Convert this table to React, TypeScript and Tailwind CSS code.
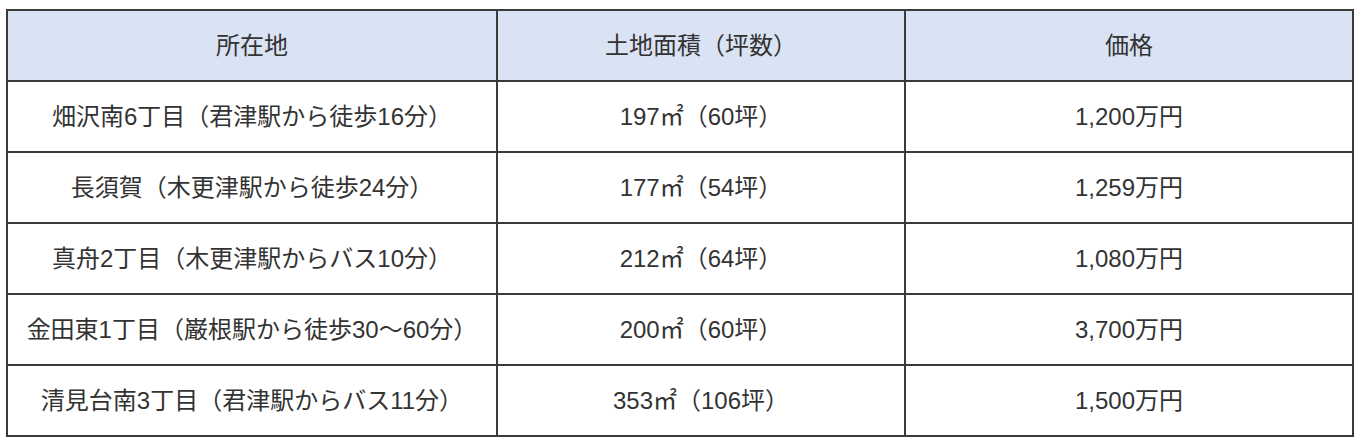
const rows = [
  { place: "畑沢南6丁目（君津駅から徒歩16分）", area: "197㎡（60坪）", price: "1,200万円" },
  { place: "長須賀（木更津駅から徒歩24分）", area: "177㎡（54坪）", price: "1,259万円" },
  { place: "真舟2丁目（木更津駅からバス10分）", area: "212㎡（64坪）", price: "1,080万円" },
  { place: "金田東1丁目（巌根駅から徒歩30～60分）", area: "200㎡（60坪）", price: "3,700万円" },
  { place: "清見台南3丁目（君津駅からバス11分）", area: "353㎡（106坪）", price: "1,500万円" },
];

export default function App() {
  return (
    <div
      className="w-[1360px] h-[438px] bg-white pt-[9px] pl-[6px] text-[#333] text-[24px]"
      style={{ fontFamily: '"Liberation Sans", "Noto Sans CJK JP", sans-serif' }}
    >
      <table className="w-[1346px] border-collapse border-2 border-[#3a3a3a] table-fixed">
        <colgroup>
          <col className="w-[490px]" />
          <col className="w-[408px]" />
          <col className="w-[448px]" />
        </colgroup>
        <thead>
          <tr className="bg-[#dae3f3] h-[71px]">
            <th className="border-2 border-[#3a3a3a] font-normal text-center">所在地</th>
            <th className="border-2 border-[#3a3a3a] font-normal text-center">土地面積（坪数）</th>
            <th className="border-2 border-[#3a3a3a] font-normal text-center">価格</th>
          </tr>
        </thead>
        <tbody>
          {rows.map(r => (
            <tr key={r.place} className="h-[71px]">
              <td className="border-2 border-[#3a3a3a] text-center">{r.place}</td>
              <td className="border-2 border-[#3a3a3a] text-center">{r.area}</td>
              <td className="border-2 border-[#3a3a3a] text-center">{r.price}</td>
            </tr>
          ))}
        </tbody>
      </table>
    </div>
  );
}
